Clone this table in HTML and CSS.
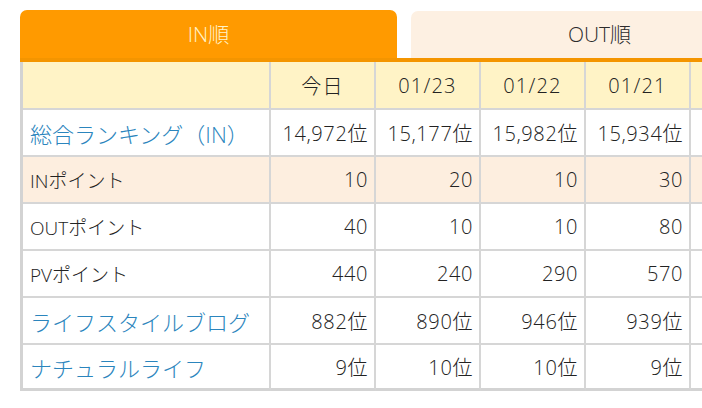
FILE: index.html
```html
<!DOCTYPE html>
<html lang="ja">
<head>
<meta charset="utf-8">
<title>ランキング</title>
<link rel="stylesheet" href="styles.css">
</head>
<body>
<div class="page">
  <div class="tabs">
    <div class="tab tab-active">IN順</div>
    <div class="tab tab-inactive">OUT順</div>
  </div>
  <table class="rank">
    <thead>
      <tr class="head">
        <th class="c-label"></th>
        <th class="c-num">今日</th>
        <th class="c-num">01/23</th>
        <th class="c-num">01/22</th>
        <th class="c-num">01/21</th>
        <th class="c-num"></th>
      </tr>
    </thead>
    <tbody>
      <tr>
        <td class="label"><a class="link big" href="#">総合ランキング（IN）</a></td>
        <td>14,972位</td><td>15,177位</td><td>15,982位</td><td>15,934位</td><td></td>
      </tr>
      <tr class="hl">
        <td class="label">INポイント</td>
        <td>10</td><td>20</td><td>10</td><td>30</td><td></td>
      </tr>
      <tr>
        <td class="label">OUTポイント</td>
        <td>40</td><td>10</td><td>10</td><td>80</td><td></td>
      </tr>
      <tr>
        <td class="label">PVポイント</td>
        <td>440</td><td>240</td><td>290</td><td>570</td><td></td>
      </tr>
      <tr>
        <td class="label"><a class="link big" href="#">ライフスタイルブログ</a></td>
        <td>882位</td><td>890位</td><td>946位</td><td>939位</td><td></td>
      </tr>
      <tr class="last">
        <td class="label"><a class="link big" href="#">ナチュラルライフ</a></td>
        <td>9位</td><td>10位</td><td>10位</td><td>9位</td><td></td>
      </tr>
    </tbody>
  </table>
</div>
</body>
</html>
```

FILE: styles.css
```css
html, body {
  margin: 0;
  padding: 0;
  background: #ffffff;
}

body {
  font-family: "Open Sans", "Noto Sans CJK JP", sans-serif;
  font-weight: 300;
  color: #222222;
  width: 702px;
  height: 408px;
  overflow: hidden;
}

.page {
  padding: 10px 0 0 20px;
  width: 800px;
}

.tabs {
  display: flex;
  gap: 14px;
  border-bottom: 4px solid #f49500;
  width: 780px;
}

.tab {
  width: 377px;
  height: 48px;
  border-radius: 7px 7px 0 0;
  display: flex;
  align-items: center;
  justify-content: center;
  font-size: 21px;
  line-height: 1;
}

.tab-active {
  background: #ff9a00;
  color: #fff3c8;
}

.tab-inactive {
  background: #fdf0e2;
  color: #2c2c2c;
  margin-top: 1px;
  height: 47px;
}

.rank {
  border-collapse: separate;
  border-spacing: 0;
  table-layout: fixed;
  width: 775px;
  border-left: 3px solid #d3d3d3;
  font-size: 20px;
  letter-spacing: 0.6px;
}

.rank th,
.rank td {
  box-sizing: border-box;
  border-right: 2px solid #d6d6d6;
  border-bottom: 2px solid #d6d6d6;
  padding: 0 6px;
  height: 47px;
  text-align: right;
  font-weight: 300;
  white-space: nowrap;
  vertical-align: middle;
}

.rank .head th {
  background: #fff3c6;
  height: 48px;
  text-align: center;
  letter-spacing: 1.2px;
}

.rank .c-label {
  width: 248px;
}

.rank .c-num {
  width: 105px;
}

.rank td.label {
  text-align: left;
  font-size: 19px;
  letter-spacing: 0;
  padding-left: 7px;
}

.rank tr.hl td {
  background: #fdeedf;
}

.rank tr.last td {
  border-bottom: 3px solid #d3d3d3;
  height: 46px;
}

.link {
  color: #2b85bd;
  text-decoration: none;
}

.big {
  font-size: 22px;
}
```
